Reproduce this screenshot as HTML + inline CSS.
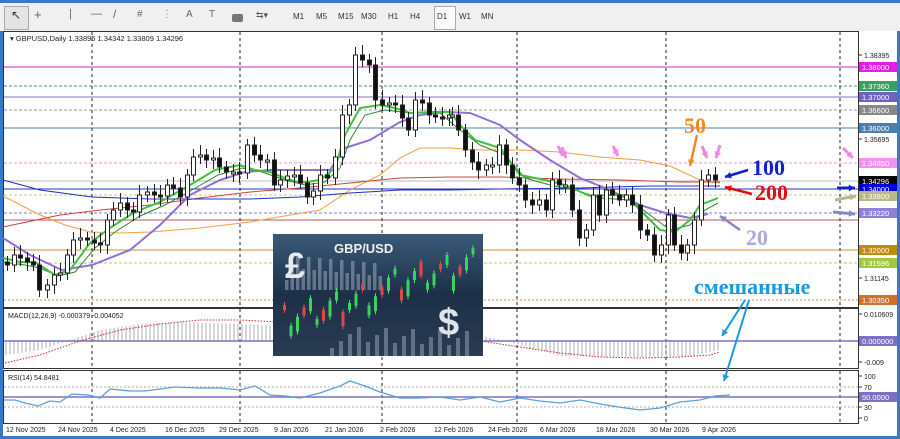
<!DOCTYPE html>
<html><head><meta charset="utf-8">
<style>
html,body{margin:0;padding:0;width:900px;height:439px;overflow:hidden;background:#fff;font-family:"Liberation Sans",sans-serif}
#tb{position:absolute;left:0;top:0;width:900px;height:31px;background:#f0f0f0;border-top:3px solid #3b78c8;box-sizing:border-box}
.t{position:absolute;top:9px;font-size:8px;color:#333}
svg{position:absolute;left:0;top:0}
</style></head><body>
<div id="tb">
<div style="position:absolute;left:4px;top:3px;width:23px;height:22px;border:1px solid #aaa;background:#e4e4e4"></div>
<div style="position:absolute;left:434px;top:3px;width:20px;height:22px;border:1px solid #aaa;background:#fafafa"></div>
<span class="t" style="left:11px;font-size:12px;top:5px">&#x2196;</span>
<span class="t" style="left:34px;font-size:13px;top:4px;color:#666">+</span>
<span class="t" style="left:69px;font-size:11px;top:5px;color:#666">|</span>
<span class="t" style="left:91px;font-size:11px;top:5px;color:#666">—</span>
<span class="t" style="left:113px;font-size:12px;top:4px;color:#666">/</span>
<span class="t" style="left:137px;font-size:10px;top:6px;color:#666">#</span>
<span class="t" style="left:162px;font-size:10px;top:6px;color:#888">⋮</span>
<span class="t" style="left:186px;font-size:10px;top:6px;color:#666">A</span>
<span class="t" style="left:209px;font-size:10px;top:6px;color:#666">T</span>
<div style="position:absolute;left:232px;top:11px;width:11px;height:8px;background:#777;border-radius:2px"></div>
<span class="t" style="left:256px;font-size:9px;top:7px;color:#555">⇆▾</span>
<span class="t" style="left:293px">M1</span><span class="t" style="left:316px">M5</span><span class="t" style="left:338px">M15</span><span class="t" style="left:361px">M30</span><span class="t" style="left:388px">H1</span><span class="t" style="left:410px">H4</span><span class="t" style="left:437px">D1</span><span class="t" style="left:459px">W1</span><span class="t" style="left:481px">MN</span>
</div>
<svg id="s" width="900" height="439" viewBox="0 0 900 439" style="top:0" font-family="Liberation Sans, sans-serif">
<rect x="0" y="31" width="3" height="408" fill="#3b78c8"/>
<rect x="0" y="436" width="900" height="3" fill="#3b78c8"/>
<rect x="897" y="31" width="3" height="408" fill="#3b78c8"/>
<rect x="3.5" y="31.5" width="855" height="276" fill="#fff" stroke="#333"/>
<rect x="3.5" y="308.5" width="855" height="60" fill="#fff" stroke="#333"/>
<rect x="3.5" y="370.5" width="855" height="53" fill="#fff" stroke="#333"/>
<g id="g"></g>
</svg>
<script>
var S=document.getElementById('g'),h='';
function L(x1,y1,x2,y2,c,w,d){h+='<line x1="'+x1+'" y1="'+y1+'" x2="'+x2+'" y2="'+y2+'" stroke="'+c+'" stroke-width="'+(w||1)+'"'+(d?' stroke-dasharray="'+d+'"':'')+'/>';}
function P(pts,c,w,d){h+='<polyline fill="none" points="'+pts+'" stroke="'+c+'" stroke-width="'+w+'"'+(d?' stroke-dasharray="'+d+'"':'')+'/>';}
function T(x,y,s,sz,c,ex){h+='<text x="'+x+'" y="'+y+'" font-size="'+sz+'" fill="'+c+'" '+(ex||'')+'>'+s+'</text>';}
var lv=[[67,'#e070e0',1.5,0],[86,'#4a9a7a',1,'3,2'],[97,'#8a70c0',1,0],[110,'#999',1,'3,2'],[128,'#4a80a8',1,0],[163,'#e89ae8',1,'3,2'],[181,'#bbb',1,0],[189,'#2030d0',1,0],[195,'#c8c890',1,'3,2'],[213,'#8a80c8',1,'3,2'],[220,'#c05050',1,0],[250,'#c89030',1,0],[263,'#b8c860',1,'3,2'],[300,'#c89070',1,'2,2']];
lv.forEach(function(l){L(4,l[0],858,l[0],l[1],l[2],l[3]);});
[92,240,382,517,666,840].forEach(function(x){L(x,32,x,307,'#222',1,'3,3');L(x,309,x,368,'#222',1,'3,3');L(x,371,x,423,'#222',1,'3,3');});
P('3,196 40,215 65,225 90,232 120,233 150,232 200,228 250,222 290,215 320,210 350,190 380,175 400,158 420,148 450,148 480,150 520,150 560,152 600,157 640,160 670,166 700,180 720,183','#f0a040',1);
P('3,227 60,215 100,210 150,205 200,198 250,192 300,188 350,183 400,178 450,177 500,177 560,179 620,180 680,182 720,182','#d04040',1);
P('3,180 40,190 92,197 150,199 250,199 300,197 350,193 400,190 450,190 500,189 580,188 650,186 720,186','#2030c0',1);
P('3,238 30,255 62,270 92,265 130,250 160,225 190,195 220,180 245,172 270,170 300,170 330,170 345,148 370,140 400,122 420,115 445,112 470,113 500,125 520,140 550,160 580,178 610,190 640,205 665,213 690,218 708,214','#9070d8',2);
P('3,262 25,265 40,268 58,276 75,272 95,248 115,232 140,216 165,205 192,190 218,175 242,168 262,172 285,180 305,185 325,182 340,168 350,140 365,115 385,110 410,113 440,113 460,130 480,145 505,155 525,178 550,185 575,190 600,198 630,200 650,215 670,230 690,225 705,210 718,203','#2a8a2a',1);
P('3,258 20,262 35,262 55,275 70,270 90,243 110,228 135,212 160,202 190,185 215,170 240,165 255,170 270,172 285,178 300,183 320,180 335,168 345,135 360,108 380,105 395,108 410,113 430,112 450,112 460,125 475,140 500,148 520,175 545,180 565,185 590,196 610,195 625,195 640,210 660,230 675,232 690,220 700,205 718,198','#40c040',2);
var cl=[[5,265],[12,255],[18,258],[25,262],[31,265],[37,290],[45,285],[52,275],[58,273],[65,255],[71,240],[78,238],[85,240],[92,243],[98,245],[105,220],[111,210],[118,203],[125,210],[131,212],[137,195],[145,192],[152,195],[158,196],[165,185],[171,188],[178,197],[185,175],[191,157],[198,155],[204,160],[211,158],[217,167],[224,172],[231,172],[237,173],[245,145],[252,155],[258,160],[265,160],[272,185],[278,180],[285,176],[292,175],[298,183],[305,197],[311,191],[318,175],[325,178],[333,157],[340,115],[347,105],[353,55],[360,60],[367,65],[373,100],[380,105],[387,103],[393,105],[400,118],[406,130],[413,100],[420,103],[427,115],[433,117],[440,118],[447,115],[450,115],[456,130],[463,150],[470,162],[476,170],[484,165],[490,165],[497,145],[504,165],[510,178],[517,185],[523,200],[530,205],[537,200],[544,210],[550,180],[557,185],[563,185],[570,210],[577,238],[584,230],[591,195],[597,215],[604,190],[610,195],[617,200],[624,195],[630,205],[638,230],[645,235],[652,255],[659,245],[666,215],[672,245],[679,253],[685,245],[692,220],[699,180],[706,175],[713,180]];
var po=262;
cl.forEach(function(c,i){var o=po,cy=c[1];var t=Math.min(o,cy),b=Math.max(o,cy);if(b-t<2)b=t+2;
 L(c[0]+2.5,t-6-(i%3)*2,c[0]+2.5,b+6+(i%4),'#222',1);
 h+='<rect x="'+c[0]+'.5" y="'+t+'" width="4" height="'+(b-t)+'" fill="'+(cy>o?'#111':'#fff')+'" stroke="#222" stroke-width="1"/>';po=cy;});
T(10,41,'▾ GBPUSD,Daily  1.33895 1.34342 1.33809 1.34296',7.5,'#222');
// MACD (drawn before inset)
T(8,318,'MACD(12,26,9) -0.000379 -0.004052',7,'#222');
L(4,341,858,341,'#7a70c8',1.5);
var hp=[[5,355],[40,350],[70,340],[100,330],[140,324],[180,322],[240,324],[280,326],[480,335],[520,345],[560,356],[640,357],[690,356],[720,350]];
function ip(a,x){for(var i=0;i<a.length-1;i++){if(x>=a[i][0]&&x<=a[i+1][0]){var f=(x-a[i][0])/(a[i+1][0]-a[i][0]);return a[i][1]+f*(a[i+1][1]-a[i][1]);}}return a[a.length-1][1];}
for(var x=6;x<=718;x+=4){L(x,341,x,ip(hp,x).toFixed(1),'#777',0.6);}
P('5,363 40,355 80,341 120,330 160,324 200,320 240,320 280,322 320,326 360,330 400,334 440,337 480,341 520,347 560,353 600,357 640,358 680,357 710,355 720,352','#c03030',1,'1.5,1.5');
// inset
h+='<defs><linearGradient id="ig" x1="0" y1="0" x2="0" y2="1"><stop offset="0" stop-color="#3a5a78"/><stop offset=".5" stop-color="#1c3048"/><stop offset="1" stop-color="#2a3c52"/></linearGradient></defs>';
h+='<rect x="273" y="234" width="210" height="122" fill="url(#ig)"/>';
for(var i=0;i<18;i++){var hh=10+((i*37)%25);h+='<rect x="'+(285+i*5.5)+'" y="'+(290-hh)+'" width="3.5" height="'+hh+'" fill="#9aaabb" opacity=".55"/>';}
for(var i=0;i<30;i++){var x=283+i*6.5,y=320-i*2.2+((i*53)%30)-15,hh=5+((i*17)%12),up=(i*7)%3!=0;
 L(x+1.5,y-3,x+1.5,y+hh+3,up?'#50e070':'#e05050',1);h+='<rect x="'+x+'" y="'+y+'" width="3" height="'+hh+'" fill="'+(up?'#40d060':'#e04848')+'"/>';}
for(var i=0;i<16;i++){var hh=8+((i*29)%22);h+='<rect x="'+(330+i*9)+'" y="'+(356-hh)+'" width="4" height="'+hh+'" fill="#a8b8c8" opacity=".45"/>';}
T(285,278,'£',36,'#e8ecf0','font-weight="bold"');
T(334,253,'GBP/USD',13,'#f0f0f0','font-weight="bold"');
T(438,335,'$',38,'#dfe4ea','font-weight="bold"');
function A(x1,y1,x2,y2,c,w){L(x1,y1,x2,y2,c,w||2.5);var a=Math.atan2(y2-y1,x2-x1),s=7;h+='<polygon fill="'+c+'" points="'+x2+','+y2+' '+(x2-s*Math.cos(a-0.5))+','+(y2-s*Math.sin(a-0.5))+' '+(x2-s*Math.cos(a+0.5))+','+(y2-s*Math.sin(a+0.5))+'"/>';}
var sf='font-family="Liberation Serif, serif" font-weight="bold"';
T(684,133,'50',22,'#f08a20',sf);A(697,135,690,166,'#f08a20');
T(752,175,'100',22,'#1020d0',sf);A(748,170,725,177,'#1020d0');
T(755,200,'200',22,'#e01010',sf);A(752,194,725,187,'#e01010');
T(746,245,'20',22,'#b0a8d8',sf);A(740,230,720,216,'#8a84c0');
T(694,294,'смешанные',22,'#1a98e0',sf+' font-family="Liberation Serif, Noto Serif CJK SC, serif"');
A(745,300,722,336,'#1a98e0',2);A(749,300,724,381,'#1a98e0',2);
A(613,146,618,156,'#f088e8',3);A(558,146,563,156,'#f088e8',3);A(562,147,566,158,'#f088e8',3);A(702,146,707,158,'#f088e8',3);A(720,145,716,158,'#f088e8',3);A(843,148,853,158,'#f088e8',3);
A(837,188,855,188,'#1020d0',3);A(835,200,856,196,'#b8b888',3);A(833,212,855,214,'#8a84c8',3);
function R(y,t,bg,fg){h+='<rect x="859" y="'+(y-5)+'" width="38" height="10" fill="'+bg+'"/>';T(862,y+3,t,7.5,fg||'#fff');}
function RT(y,t){L(859,y,862,y,'#333');T(864,y+3,t,7,'#222');}
RT(55,'1.38395');RT(139,'1.35695');RT(278,'1.31145');RT(314,'0.010609');RT(362,'-0.009');
RT(376,'100');RT(387,'70');RT(407,'30');RT(418,'0');
R(67,'1.38000','#e020e0');R(86,'1.37360','#3aa060');R(97,'1.37000','#7060c0');R(110,'1.36600','#888');R(128,'1.36000','#4a80b0');R(163,'1.34850','#f090f0');R(181,'1.34296','#000');R(189,'1.34000','#0000e0');R(196,'1.33800','#b8b888');R(213,'1.33220','#9080d8');R(250,'1.32000','#c08a10');R(263,'1.31596','#a0c840');R(300,'1.30350','#d0702a');
R(341,'0.000000','#7a70c8');R(397,'50.0000','#7a70c8');
T(8,380,'RSI(14) 54.8481',7,'#222');
L(4,387,858,387,'#aaa',1,'2,2');L(4,407,858,407,'#aaa',1,'2,2');L(4,397,858,397,'#7a70c8',1.5);
P('4,400 15,400 25,403 38,406 50,401 60,402 72,394 88,395 100,398 110,389 130,391 145,391 160,389 175,387 200,388 220,388 240,390 255,386 270,395 285,396 300,398 320,393 340,386 350,381 365,386 380,392 400,398 420,398 440,397 460,400 480,397 500,402 520,398 540,401 560,403 580,400 600,404 625,408 640,410 660,408 680,402 700,400 715,396 730,395','#5aa0d8',1.3);
var d=[[6,'12 Nov 2025'],[58,'24 Nov 2025'],[110,'4 Dec 2025'],[165,'16 Dec 2025'],[219,'29 Dec 2025'],[274,'9 Jan 2026'],[325,'21 Jan 2026'],[380,'2 Feb 2026'],[434,'12 Feb 2026'],[488,'24 Feb 2026'],[540,'6 Mar 2026'],[596,'18 Mar 2026'],[650,'30 Mar 2026'],[702,'9 Apr 2026']];
d.forEach(function(a){T(a[0],432,a[1],7,'#222');});
S.innerHTML=h;
</script>
</body></html>
